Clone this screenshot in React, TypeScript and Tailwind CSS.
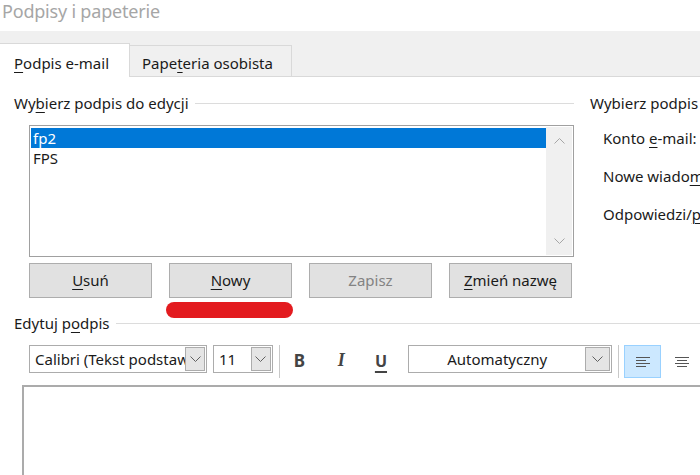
import React from 'react';

const ui = "font-['Segoe_UI','Noto_Sans',sans-serif]";

function Chevron({ up = false, className = '' }: { up?: boolean; className?: string }) {
  return (
    <svg width="11" height="7" viewBox="0 0 11 7" className={className}>
      <path
        d={up ? 'M0.5 6.5 L5.5 1.5 L10.5 6.5' : 'M0.5 0.5 L5.5 5.5 L10.5 0.5'}
        fill="none"
        stroke="currentColor"
        strokeWidth="1"
      />
    </svg>
  );
}

function AlignIcon({ center = false }: { center?: boolean }) {
  const rows = [14, 10, 14, 10];
  return (
    <svg width="16" height="12" viewBox="0 0 16 12" className="text-[#555]">
      {rows.map((w, i) => (
        <rect key={i} x={center ? (16 - w) / 2 : 1} y={1 + i * 3} width={w} height="1" fill="currentColor" />
      ))}
    </svg>
  );
}

function Heading({ children, lineClass = '' }: { children: React.ReactNode; lineClass?: string }) {
  return (
    <div className="flex h-[20px] items-center">
      <span className="whitespace-nowrap">{children}</span>
      <div className={`h-px flex-1 bg-[#dcdcdc] ${lineClass}`} />
    </div>
  );
}

function Btn({ children, disabled = false }: { children: React.ReactNode; disabled?: boolean }) {
  return (
    <div
      className={`flex h-[35px] w-[123px] items-center justify-center border border-[#adadad] bg-[#e1e1e1] ${
        disabled ? 'text-[#838383]' : 'text-[#1a1a1a]'
      }`}
    >
      {children}
    </div>
  );
}

function Drop({ w = 20 }: { w?: number }) {
  return (
    <div
      className="my-px mr-px flex items-center justify-center self-stretch border border-[#acacac] bg-[#e5e5e5] text-[#606060]"
      style={{ width: w }}
    >
      <Chevron />
    </div>
  );
}

const U = ({ children }: { children: React.ReactNode }) => (
  <span className="underline decoration-1 underline-offset-[3px]">{children}</span>
);

export default function App() {
  return (
    <div className={`h-[475px] w-[700px] overflow-hidden bg-white text-[15px] text-[#1a1a1a] ${ui}`}>
      <div className="h-[31px] whitespace-nowrap pl-[2px] text-[18px] leading-[22px] tracking-[-0.2px] text-[#a6a6a6]">
        Podpisy i papeterie
      </div>

      <div className="flex h-[46px] items-end border-b border-[#d9d9d9] bg-[#f0f0f0]">
        <div className="-mb-px h-[34px] w-[130px] whitespace-nowrap border-t border-r border-[#d9d9d9] bg-white pl-[14px] pt-[8px]">
          <U>P</U>odpis e-mail
        </div>
        <div className="h-[31px] w-[162px] whitespace-nowrap border-t border-r border-[#d9d9d9] pl-[12px] pt-[6px]">
          Pape<U>t</U>eria osobista
        </div>
      </div>

      <div className="flex">
        <div className="w-[574px] shrink-0 pl-[14px] pt-[16px]">
          <Heading lineClass="ml-[6px]">
            Wy<U>b</U>ierz podpis do edycji
          </Heading>

          <div className="ml-[15px] mt-[12px] flex h-[132px] w-[545px] border border-[#a0a0a0] p-px">
            <div className="flex-1 pt-px">
              <div className="h-[20px] bg-[#0078d7] pl-[2px] leading-[20px] text-white">fp2</div>
              <div className="h-[20px] pl-[2px] leading-[20px]">FPS</div>
            </div>
            <div className="flex w-[26px] flex-col items-center justify-between bg-[#f0f0f0] py-[10px] text-[#a6a6a6]">
              <Chevron up />
              <Chevron />
            </div>
          </div>

          <div className="ml-[15px] mt-[6px] flex gap-[17px]">
            <Btn>
              <U>U</U>suń
            </Btn>
            <div className="relative">
              <Btn>
                <U>N</U>owy
              </Btn>
              <div className="absolute left-[-3px] top-[39px] h-[16px] w-[127px] rounded-full bg-[#e31b1f]" />
            </div>
            <Btn disabled>Zapisz</Btn>
            <Btn>
              <U>Z</U>mień nazwę
            </Btn>
          </div>
        </div>

        <div className="shrink-0 whitespace-nowrap pl-[16px] pt-[16px]">
          <div className="h-[20px] leading-[20px]">Wybierz podpis domyślny</div>
          <div className="pl-[13px]">
            <div className="mt-[15px] h-[20px] leading-[20px]">
              Konto <U>e</U>-mail:
            </div>
            <div className="mt-[18px] h-[20px] leading-[20px]">
              Nowe wiado<U>m</U>ości:
            </div>
            <div className="mt-[18px] h-[20px] leading-[20px]">
              Odpowiedzi/<U>p</U>rzesyłane dalej:
            </div>
          </div>
        </div>
      </div>

      <div className="mt-[15px] pl-[14px]">
        <Heading lineClass="ml-[6px]">
          Edytuj p<U>o</U>dpis
        </Heading>
      </div>

      <div className="mt-[12px] flex h-[33px] items-start pl-[29px]">
        <div className="flex h-[28px] w-[178px] items-center border border-[#acacac] bg-white">
          <span className="flex-1 overflow-hidden whitespace-nowrap pl-[5px]">Calibri (Tekst podstawowy)</span>
          <Drop />
        </div>
        <div className="ml-[6px] flex h-[28px] w-[60px] items-center border border-[#acacac] bg-white">
          <span className="flex-1 pl-[5px]">11</span>
          <Drop />
        </div>
        <div className="ml-[6px] h-[33px] w-px bg-[#c8c8c8]" />
        <div className="flex h-[31px] w-[40px] items-center justify-center text-[17px] font-bold text-[#444]">B</div>
        <div className="ml-[2px] flex h-[31px] w-[40px] items-center justify-center font-['Liberation_Serif',serif] text-[18px] font-bold italic text-[#444]">
          I
        </div>
        <div className="flex h-[31px] w-[40px] items-center justify-center text-[16px] font-bold text-[#444] underline decoration-2 underline-offset-[4px]">
          U
        </div>
        <div className="ml-[7px] flex h-[28px] w-[206px] items-center border border-[#acacac] bg-white">
          <span className="flex-1 text-center">Automatyczny</span>
          <Drop w={25} />
        </div>
        <div className="ml-[6px] h-[33px] w-px bg-[#c8c8c8]" />
        <div className="ml-[5px] flex h-[33px] w-[37px] items-center justify-center border border-[#99d1ff] bg-[#cce8ff]">
          <AlignIcon />
        </div>
        <div className="ml-[2px] flex h-[33px] w-[37px] items-center justify-center">
          <AlignIcon center />
        </div>
      </div>

      <div className="ml-[22px] mt-[7px] h-[200px] w-[700px] border-2 border-[#ababab]" />
    </div>
  );
}
